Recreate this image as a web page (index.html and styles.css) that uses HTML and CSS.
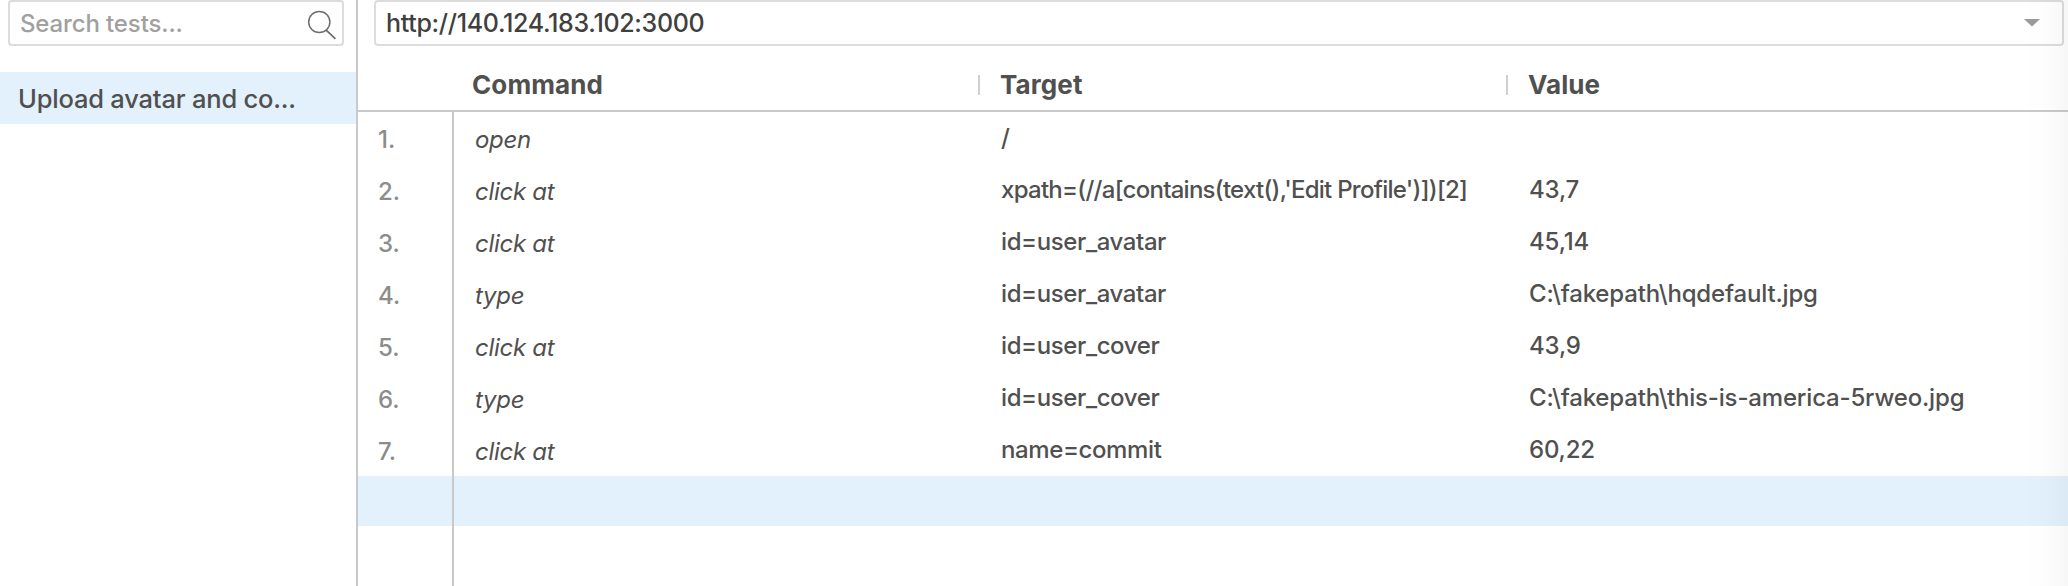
FILE: index.html
```html
<!DOCTYPE html>
<html lang="en">
<head>
<meta charset="utf-8">
<title>Test editor</title>
<link rel="stylesheet" href="styles.css">
</head>
<body>
<div class="app">
  <aside class="sidebar">
    <div class="search">
      <span class="search-text">Search tests...</span>
      <svg class="search-icon" width="30" height="30" viewBox="0 0 30 30" fill="none" stroke="#6e6e6e" stroke-width="1.5">
        <circle cx="12.3" cy="12" r="10.6"/>
        <path d="M19.2 20.2 28.4 28.8" stroke-width="1.8"/>
      </svg>
    </div>
    <div class="test selected">Upload avatar and co...</div>
  </aside>
  <main class="editor">
    <div class="url">
      <span class="url-text">http://140.124.183.102:3000</span>
      <svg class="caret" width="16" height="8" viewBox="0 0 16 8"><path d="M0 0h16L8 7.5z" fill="#9b9b9b"/></svg>
    </div>
    <div class="row head">
      <div class="num"></div>
      <div class="cell">Command</div>
      <div class="cell split">Target</div>
      <div class="cell split">Value</div>
    </div>
    <div class="rows">
      <div class="row"><div class="num">1.</div><div class="cell command">open</div><div class="cell">/</div><div class="cell"></div></div>
      <div class="row"><div class="num">2.</div><div class="cell command">click at</div><div class="cell xpath">xpath=(//a[contains(text(),'Edit Profile')])[2]</div><div class="cell value">43,7</div></div>
      <div class="row"><div class="num">3.</div><div class="cell command">click at</div><div class="cell">id=user_avatar</div><div class="cell value">45,14</div></div>
      <div class="row"><div class="num">4.</div><div class="cell command">type</div><div class="cell">id=user_avatar</div><div class="cell value">C:\fakepath\hqdefault.jpg</div></div>
      <div class="row"><div class="num">5.</div><div class="cell command">click at</div><div class="cell">id=user_cover</div><div class="cell value">43,9</div></div>
      <div class="row"><div class="num">6.</div><div class="cell command">type</div><div class="cell">id=user_cover</div><div class="cell value">C:\fakepath\this-is-america-5rweo.jpg</div></div>
      <div class="row"><div class="num">7.</div><div class="cell command">click at</div><div class="cell">name=commit</div><div class="cell value">60,22</div></div>
      <div class="row current"><div class="num"></div><div class="cell"></div><div class="cell"></div><div class="cell"></div></div>
      <div class="row filler"><div class="num"></div></div>
    </div>
  </main>
  <div class="edge-shade"></div>
</div>
</body>
</html>
```
FILE: styles.css
```css
* { box-sizing: border-box; }

body {
  margin: 0;
  background: #fff;
  color: #505050;
  font-family: Inter, "Liberation Sans", sans-serif;
  font-size: 24px;
  font-weight: 450;
}

.app {
  position: relative;
  display: flex;
  height: 586px;
  overflow: hidden;
}

.sidebar {
  flex: none;
  width: 358px;
  border-right: 2px solid #c9c9c9;
}

.search {
  display: flex;
  align-items: center;
  justify-content: space-between;
  height: 46px;
  margin: 0 12px 26px 8px;
  padding: 0 5px 0 10px;
  border: 2px solid #dcdcdc;
  border-radius: 4px;
}

.search-text {
  color: #a0a0a0;
  letter-spacing: -0.13px;
}

.search-icon { margin-top: 3px; }

.test {
  height: 52px;
  padding-left: 18px;
  line-height: 53px;
  font-size: 25.5px;
  letter-spacing: -0.2px;
  white-space: nowrap;
}

.selected { background: #e3f1fc; }

.editor {
  flex: 1;
  display: flex;
  flex-direction: column;
}

.url {
  display: flex;
  flex: none;
  align-items: center;
  justify-content: space-between;
  height: 46px;
  margin: 0 4px 12px 16px;
  padding: 0 22px 0 10px;
  border: 2px solid #dcdcdc;
  border-radius: 4px;
}

.url-text {
  color: #404040;
  font-size: 25px;
  letter-spacing: -0.32px;
}

.row {
  display: grid;
  grid-template-columns: 96px 528px 528px 1fr;
  height: 52px;
  line-height: 51px;
}

.head {
  flex: none;
  height: 54px;
  border-bottom: 2px solid #c9c9c9;
  font-size: 26px;
  font-weight: 700;
  line-height: 54px;
}

.cell {
  padding-left: 19px;
  letter-spacing: -0.39px;
  white-space: nowrap;
}

.head .cell {
  padding-left: 18px;
  letter-spacing: 0.1px;
}

.head .split {
  display: flex;
  align-items: center;
  padding-left: 0;
}

.split::before {
  content: "";
  width: 2px;
  height: 20px;
  margin: 0 20px 0 -4px;
  background: #cfcfcf;
}

.rows {
  flex: 1;
  display: flex;
  flex-direction: column;
}

.rows .num {
  padding-left: 20px;
  border-right: 2px solid #c9c9c9;
  color: #8c8c8c;
  line-height: 56px;
}

.rows .command {
  padding-left: 21px;
  font-style: italic;
  line-height: 56px;
  letter-spacing: -0.28px;
}

.rows .xpath { letter-spacing: -0.73px; }

.rows .value { letter-spacing: -0.17px; }

.current {
  height: 50px;
  background: #e3f1fc;
}

.filler {
  flex: 1;
  height: auto;
}

.edge-shade {
  position: absolute;
  top: 0;
  right: 0;
  bottom: 0;
  width: 48px;
  background: linear-gradient(to right, rgba(0, 0, 0, 0), rgba(0, 0, 0, 0.008) 50%, rgba(0, 0, 0, 0.03));
}
```
